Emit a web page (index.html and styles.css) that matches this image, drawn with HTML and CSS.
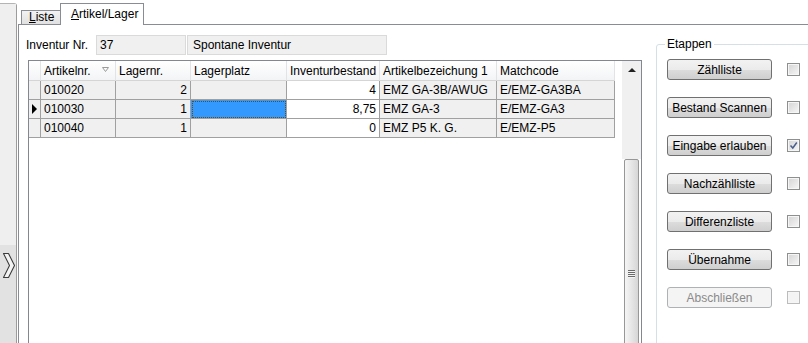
FILE: index.html
```html
<!DOCTYPE html>
<html lang="de">
<head>
  <meta charset="UTF-8" />
  <title>Inventur</title>
  <link rel="stylesheet" href="styles.css">
</head>
<body>
  <div class="window">
    <aside class="side">
      <div class="side-upper"></div>
      <div class="side-lower">
        <svg class="chevron" width="14" height="28" viewBox="0 0 14 28">
          <polygon points="1.5,1.5 6.5,1.5 12.5,13.5 6.5,25.5 1.5,25.5 7.5,13.5" fill="#f4f4f4" stroke="#3c3c3c" stroke-width="1.1" stroke-linejoin="round" />
        </svg>
      </div>
    </aside>

    <div class="main">
      <nav class="tabs">
        <span class="tab"><u>L</u>iste</span>
        <span class="tab tab-active"><u>A</u>rtikel/Lager</span>
      </nav>

      <div class="page">
        <section class="content">
          <div class="head-row">
            <span class="head-label">Inventur Nr.</span>
            <div class="field field-nr">37</div>
            <div class="field field-name">Spontane Inventur</div>
          </div>

          <div class="grid">
            <div class="grid-view">
              <table class="grid-table">
                <thead>
                  <tr>
                    <th class="ind"></th>
                    <th class="c-art">Artikelnr.<svg class="sort" width="7" height="5" viewBox="0 0 7 5"><polygon points="0.5,0.5 6.5,0.5 3.5,4.5" fill="none" stroke="#9a9a9a" stroke-width="1" /></svg></th>
                    <th class="c-lnr">Lagernr.</th>
                    <th class="c-platz">Lagerplatz</th>
                    <th class="c-best">Inventurbestand</th>
                    <th class="c-bez">Artikelbezeichung 1</th>
                    <th class="c-match">Matchcode</th>
                  </tr>
                </thead>
                <tbody>
                  <tr>
                    <td class="ind"></td>
                    <td>010020</td>
                    <td class="num">2</td>
                    <td></td>
                    <td class="num edit">4</td>
                    <td>EMZ GA-3B/AWUG</td>
                    <td>E/EMZ-GA3BA</td>
                  </tr>
                  <tr>
                    <td class="ind"><span class="arrow"></span></td>
                    <td>010030</td>
                    <td class="num">1</td>
                    <td class="selected"></td>
                    <td class="num edit">8,75</td>
                    <td>EMZ GA-3</td>
                    <td>E/EMZ-GA3</td>
                  </tr>
                  <tr>
                    <td class="ind"></td>
                    <td>010040</td>
                    <td class="num">1</td>
                    <td></td>
                    <td class="num edit">0</td>
                    <td>EMZ P5 K. G.</td>
                    <td>E/EMZ-P5</td>
                  </tr>
                </tbody>
              </table>
            </div>
            <div class="scrollbar">
              <div class="scroll-up"><span class="up-arrow"></span></div>
              <div class="scroll-track"></div>
              <div class="scroll-thumb"><span class="grip"></span></div>
            </div>
          </div>
        </section>

        <fieldset class="stages">
          <legend>Etappen</legend>
          <div class="stage">
            <button class="btn">Zählliste</button>
            <span class="check"></span>
          </div>
          <div class="stage">
            <button class="btn">Bestand Scannen</button>
            <span class="check"></span>
          </div>
          <div class="stage">
            <button class="btn">Eingabe erlauben</button>
            <span class="check checked">
              <svg width="9" height="9" viewBox="0 0 9 9"><path d="M1.5 4.5 L3.8 7 L7.8 1.5" fill="none" stroke="#4a5e8e" stroke-width="1.5" /></svg>
            </span>
          </div>
          <div class="stage">
            <button class="btn">Nachzählliste</button>
            <span class="check"></span>
          </div>
          <div class="stage">
            <button class="btn">Differenzliste</button>
            <span class="check"></span>
          </div>
          <div class="stage">
            <button class="btn">Übernahme</button>
            <span class="check"></span>
          </div>
          <div class="stage">
            <button class="btn" disabled>Abschließen</button>
            <span class="check check-disabled"></span>
          </div>
        </fieldset>
      </div>
    </div>
  </div>
</body>
</html>
```

FILE: styles.css
```css
body {
  margin: 0;
  background: #fff;
  font-family: 'Liberation Sans', Arial, sans-serif;
  font-size: 12px;
  color: #000;
  overflow: hidden;
}
.window {
  display: flex;
  width: 808px;
  height: 343px;
  overflow: hidden;
}

/* left collapse strip */
.side {
  width: 16px;
  margin-top: 3px;
  border-top: 1px solid #b4b4b4;
  border-right: 1px solid #9c9c9c;
  border-top-right-radius: 3px;
  display: flex;
  flex-direction: column;
  flex: none;
}
.side-upper {
  height: 241px;
  background: #efefef;
}
.side-lower {
  flex: 1;
  background: #e2e2e2;
  padding: 7px 0 0 2px;
}
.chevron {
  display: block;
}

/* tabs */
.main {
  flex: 1;
  min-width: 0;
  margin-left: 1px;
  display: flex;
  flex-direction: column;
}
.tabs {
  height: 24px;
  display: flex;
  align-items: flex-end;
  padding-left: 3px;
}
.tab {
  box-sizing: border-box;
  height: 14px;
  width: 39px;
  padding-left: 7px;
  border: 1px solid #898c95;
  border-bottom: none;
  border-right: none;
  background: linear-gradient(#f2f2f2, #e1e1e1);
  line-height: 13px;
}
.tab-active {
  position: relative;
  z-index: 1;
  height: 22px;
  width: 84px;
  margin-bottom: -1px;
  padding-left: 10px;
  padding-top: 3px;
  border-right: 1px solid #898c95;
  background: #fff;
  line-height: 14px;
}
.page {
  flex: 1;
  display: flex;
  align-items: flex-start;
  border-top: 1px solid #898c95;
  border-left: 1px solid #898c95;
  padding-top: 10px;
  overflow: hidden;
}

/* left content */
.content {
  width: 616px;
  padding-left: 7px;
  flex: none;
}
.head-row {
  display: flex;
  align-items: center;
  height: 20px;
}
.head-label {
  width: 70px;
}
.field {
  box-sizing: border-box;
  height: 20px;
  line-height: 18px;
  padding-left: 3px;
  background: #f0f0f0;
  border: 1px solid #dadada;
}
.field-nr {
  width: 90px;
  margin-right: 1px;
}
.field-name {
  width: 200px;
  padding-left: 5px;
}

/* grid */
.grid {
  box-sizing: border-box;
  width: 614px;
  height: 300px;
  margin: 5px 0 0 2px;
  border: 1px solid #828790;
  display: flex;
}
.grid-view {
  flex: 1;
}
.grid-table {
  border-collapse: separate;
  border-spacing: 0;
  table-layout: fixed;
  width: 586px;
}
.grid-table th,
.grid-table td {
  box-sizing: border-box;
  padding: 0 3px;
  white-space: nowrap;
  overflow: hidden;
  text-align: left;
  font-weight: normal;
  line-height: 14px;
}
.grid-table th {
  height: 20px;
  background: linear-gradient(#ffffff, #f3f4f6);
  border-right: 1px solid #e2e3e5;
  border-bottom: 1px solid #d5d5d5;
}
.grid-table td {
  height: 19px;
  background: #f0f0f0;
  border-right: 1px solid #a0a0a0;
  border-bottom: 1px solid #a0a0a0;
}
.grid-table .ind { width: 12px; padding: 0; }
.grid-table td.ind { background: #f0f0f0; border-right: 1px solid #a0a0a0; }
.c-art { width: 75px; }
.c-lnr { width: 75px; }
.c-platz { width: 96px; }
.c-best { width: 93px; }
.c-bez { width: 117px; }
.c-match { width: 118px; }
.sort {
  margin-left: 11px;
  vertical-align: 3px;
}
.grid-table td.num {
  text-align: right;
}
.grid-table td.edit {
  background: #fff;
}
.grid-table td.selected {
  background: #3399ff;
  outline: 1px dotted #6b4a12;
  outline-offset: -2px;
}
.arrow {
  display: block;
  margin-left: 3px;
  width: 0;
  height: 0;
  border-top: 5px solid transparent;
  border-bottom: 5px solid transparent;
  border-left: 5px solid #000;
}

/* scrollbar */
.scrollbar {
  width: 19px;
  flex: none;
  display: flex;
  flex-direction: column;
}
.scroll-up {
  height: 17px;
  background: #f0f0f0;
  display: flex;
  justify-content: center;
  align-items: center;
}
.up-arrow {
  width: 0;
  height: 0;
  border-left: 4px solid transparent;
  border-right: 4px solid transparent;
  border-bottom: 4px solid #222;
}
.scroll-track {
  height: 81px;
  background: #f0f0f0;
}
.scroll-thumb {
  flex: 1;
  margin: 0 2px 0 2px;
  border: 1px solid #979797;
  border-radius: 2px;
  background: linear-gradient(90deg, #f5f5f5, #e6e6e6 50%, #d6d6d6);
  display: flex;
  justify-content: center;
  padding-top: 110px;
}
.grip {
  width: 7px;
  height: 8px;
  background: repeating-linear-gradient(#6a6a6a 0 1px, #f4f4f4 1px 2px);
}

/* stages group */
.stages {
  margin: 2px 0 0 14px;
  padding: 8px 0 0 10px;
  width: 220px;
  min-width: 220px;
  height: 320px;
  border: 1px solid #d5dfe5;
  border-radius: 3px;
  flex: none;
}
.stages legend {
  margin-left: -2px;
  padding: 0 2px;
  line-height: 14px;
}
.stage {
  display: flex;
  align-items: center;
  gap: 15px;
  height: 21px;
  margin-bottom: 17px;
}
.btn {
  box-sizing: border-box;
  width: 105px;
  height: 21px;
  padding: 0;
  border: 1px solid #707070;
  border-radius: 3px;
  background: linear-gradient(#f2f2f2 0%, #ebebeb 50%, #dddddd 51%, #cfcfcf 100%);
  font-family: 'Liberation Sans', Arial, sans-serif;
  font-size: 12px;
  color: #000;
}
.btn:disabled {
  border-color: #adb2b5;
  background: #f4f4f4;
  color: #8a8a8a;
}
.check {
  box-sizing: border-box;
  width: 13px;
  height: 13px;
  border: 1px solid #8e8f8f;
  box-shadow: inset 0 0 0 1px #f6f6f6;
  background: linear-gradient(135deg, #d4d4d4, #f7f7f7);
  display: flex;
  align-items: center;
  justify-content: center;
}
.check-disabled {
  border-color: #bcbcbc;
  background: #f4f4f4;
}
```
